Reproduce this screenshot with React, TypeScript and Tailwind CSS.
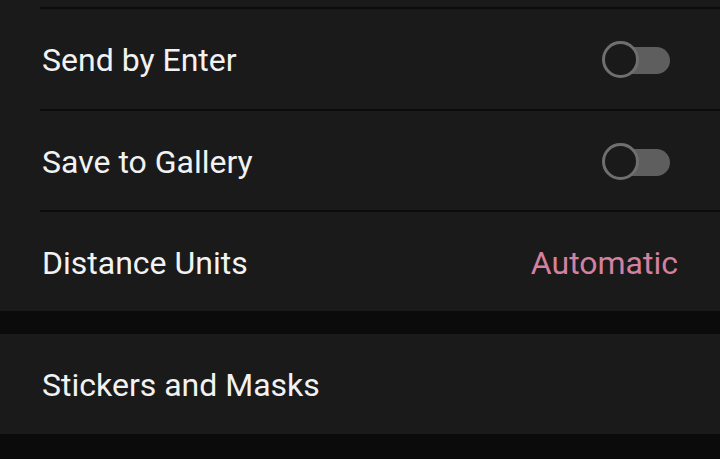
import React from "react";

function Toggle() {
  return (
    <div className="relative w-[70px] h-[38px] flex items-center">
      <div className="absolute left-[18px] right-[2px] top-[6px] h-[27px] rounded-full bg-[#5e5e5e]" />
      <div className="absolute left-0 top-0 w-[37px] h-[37px] rounded-full border-[3px] border-[#6f6f6f] bg-[#1a1a1a]" />
    </div>
  );
}

function Divider() {
  return <div className="ml-[40px] h-[2px] bg-[#0c0c0c]" />;
}

function Row({ label, right, h }: { label: string; right?: React.ReactNode; h: string }) {
  return (
    <div className={`flex items-center justify-between pl-[42px] pr-[42px] pt-[2px] ${h}`}>
      <span className="text-[32px] leading-none text-[#f2f2f2]">{label}</span>
      {right}
    </div>
  );
}

export default function App() {
  return (
    <div
      className="w-[720px] h-[459px] overflow-hidden bg-[#0b0b0b]"
      style={{ fontFamily: "Roboto, 'Liberation Sans', sans-serif" }}
    >
      <div className="bg-[#1a1a1a] pt-[7px]">
        <Divider />
        <div className="flex items-center justify-between pl-[42px] pr-[48px] pt-[2px] h-[100px]">
          <span className="text-[32px] leading-none text-[#f2f2f2]">Send by Enter</span>
          <Toggle />
        </div>
        <Divider />
        <div className="flex items-center justify-between pl-[42px] pr-[48px] pt-[2px] h-[99px]">
          <span className="text-[32px] leading-none text-[#f2f2f2]">Save to Gallery</span>
          <Toggle />
        </div>
        <Divider />
        <Row
          label="Distance Units"
          h="h-[99px]"
          right={<span className="text-[32px] leading-none text-[#d4809f]">Automatic</span>}
        />
      </div>
      <div className="h-[23px]" />
      <div className="bg-[#1a1a1a]">
        <Row label="Stickers and Masks" h="h-[100px]" />
      </div>
    </div>
  );
}
